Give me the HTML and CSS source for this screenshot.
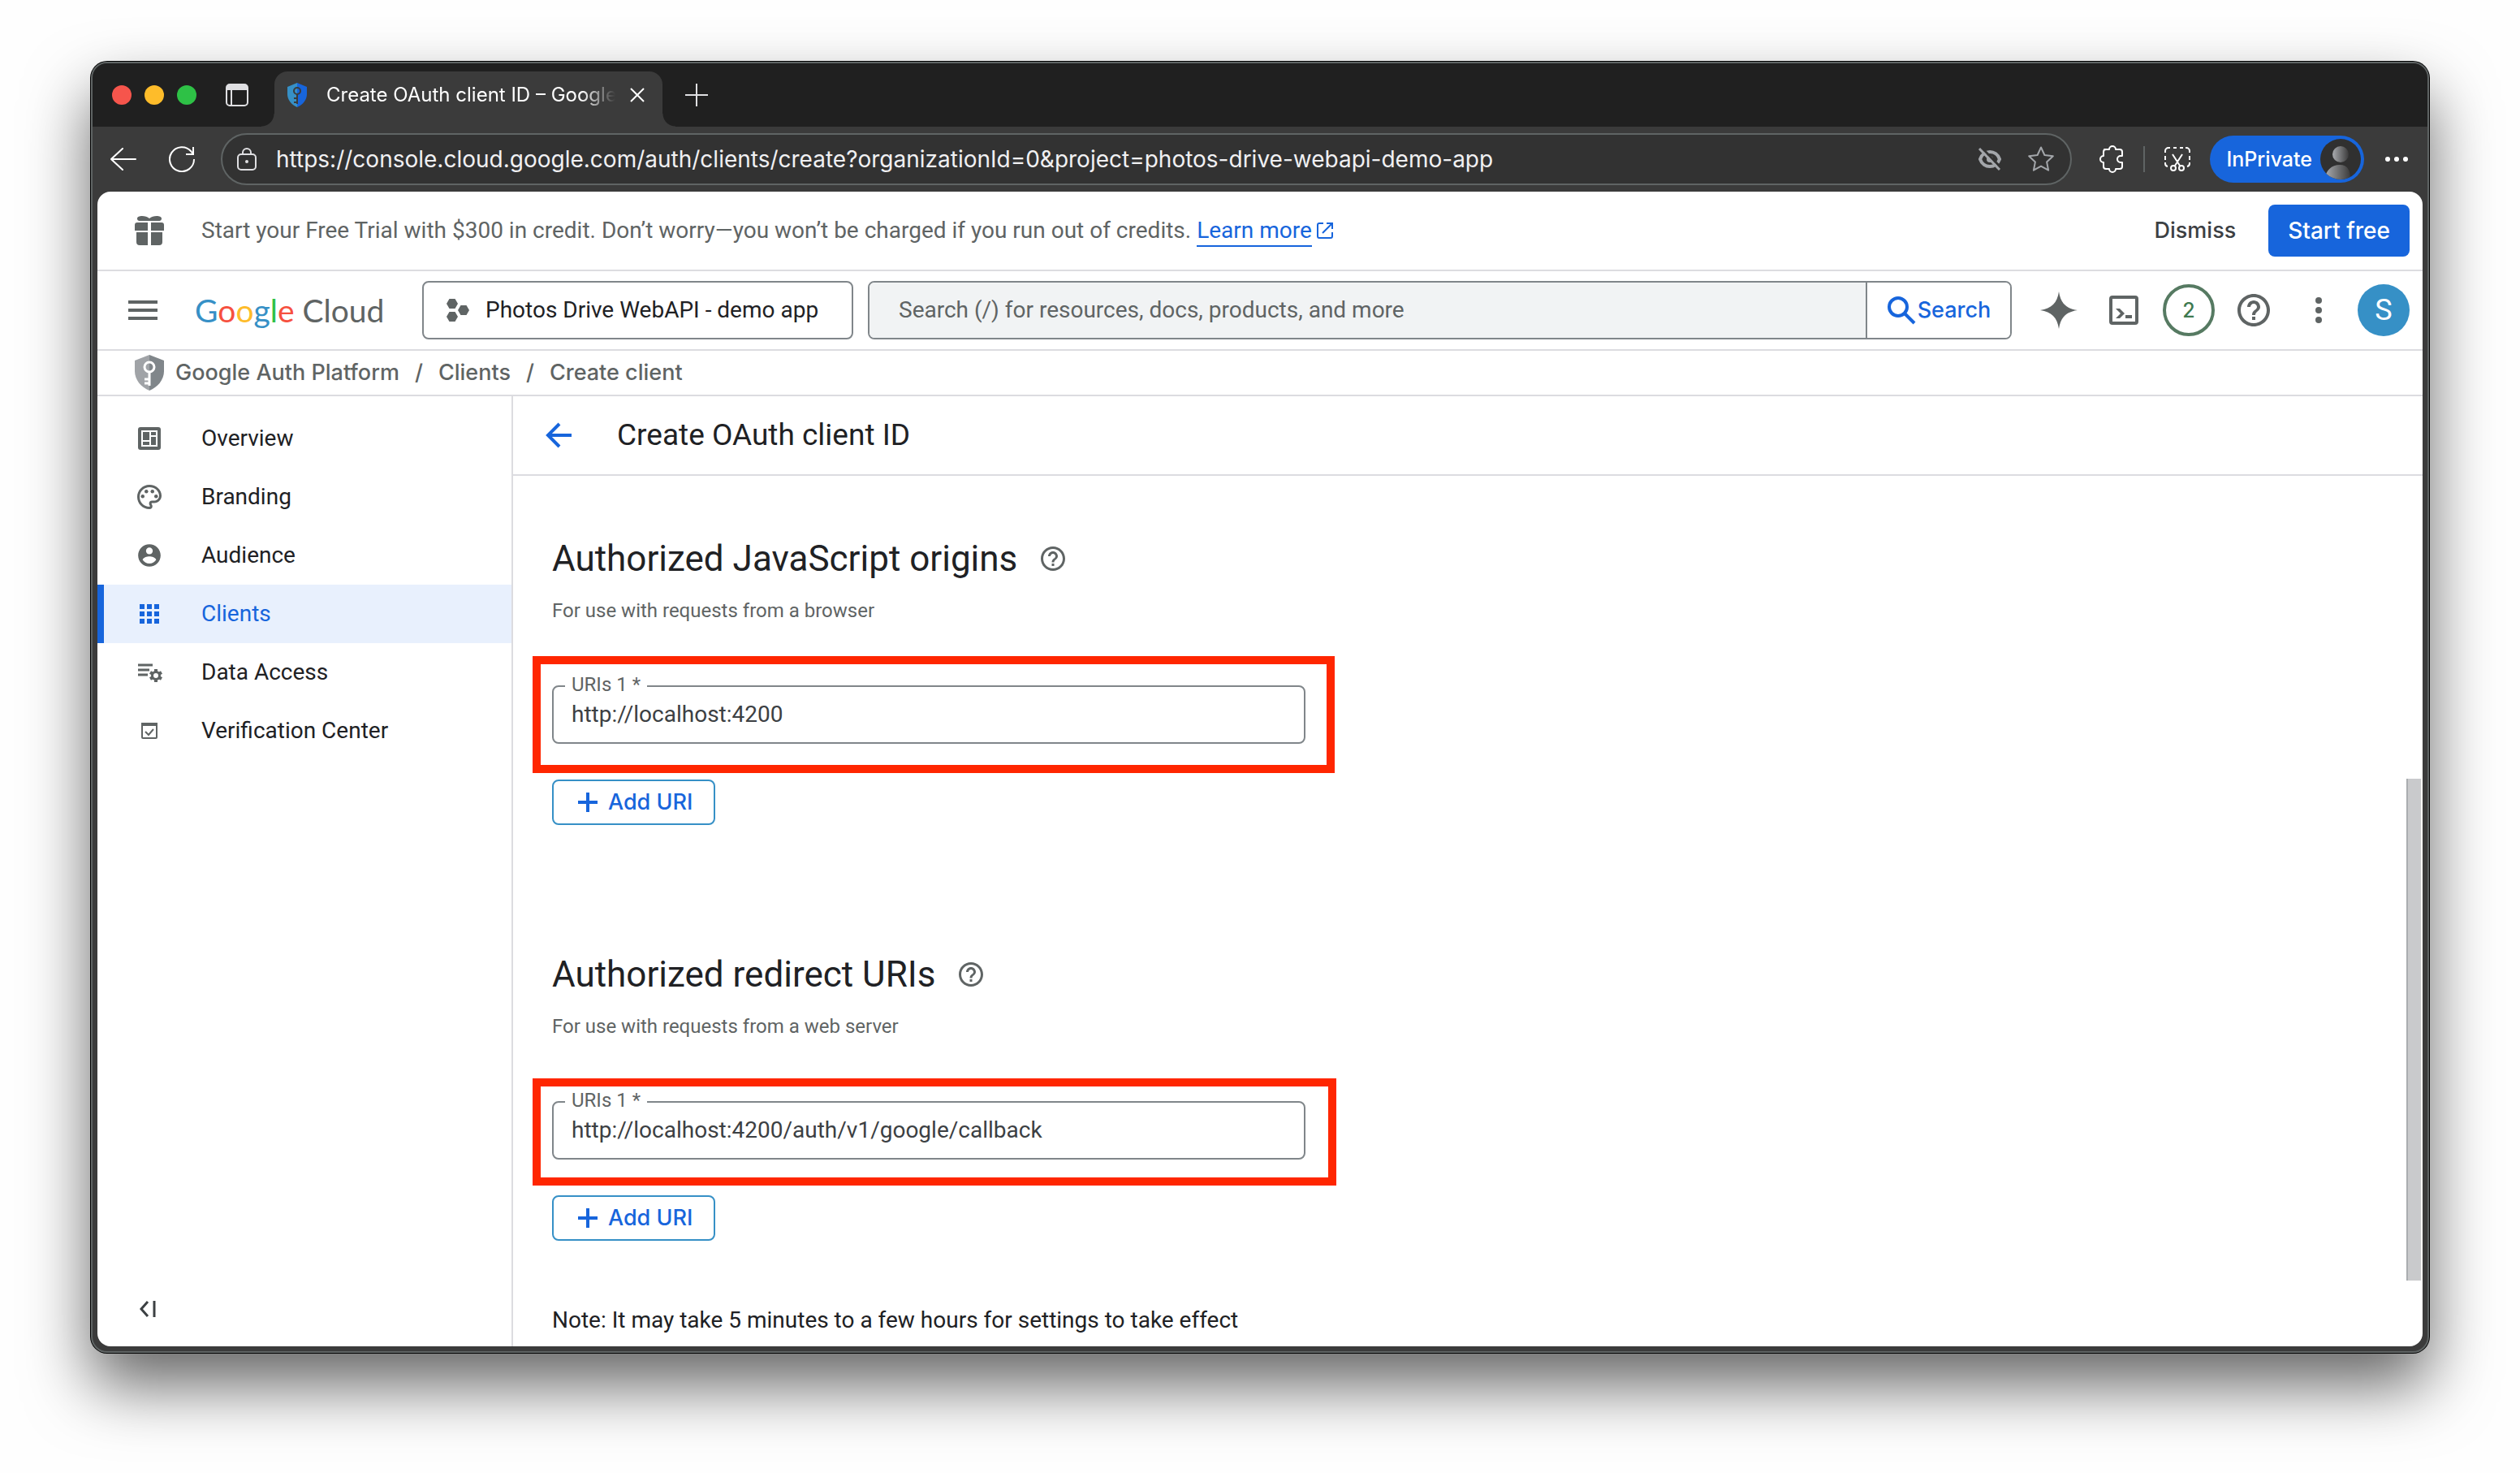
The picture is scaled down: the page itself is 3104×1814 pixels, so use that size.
FILE: index.html
```html
<!DOCTYPE html>
<html lang="en">
<head>
<meta charset="utf-8">
<meta name="viewport" content="width=device-width, initial-scale=1">
<title>Create OAuth client ID – Google Auth Platform</title>
<link rel="stylesheet" href="styles.css">
</head>
<body>
<div class="window">
  <header class="tab-strip">
    <div class="lights"><span class="light light-red"></span><span class="light light-yellow"></span><span class="light light-green"></span></div>
    <button class="plain tab-actions" aria-label="Tab actions">
      <svg width="28" height="28" viewBox="0 0 28 28"><rect x="1" y="1" width="26" height="26" rx="4" fill="none" stroke="#dfdfe2" stroke-width="2"/><path d="M1 8V5a4 4 0 0 1 4-4h18a4 4 0 0 1 4 4v3zM6 8h2v19H6z" fill="#dfdfe2"/></svg>
    </button>
    <div class="tab">
      <svg width="24" height="30" viewBox="0 0 24 30"><path d="M12 0 0 5v9c0 7 5 13 12 16z" fill="#3690c6"/><path d="m12 0 12 5v9c0 7-5 13-12 16z" fill="#1765dc"/><circle cx="12" cy="10" r="4" fill="none" stroke="#3b3b3b" stroke-width="2"/><path d="M12 14v12M12 19H8M12 24H8" fill="none" stroke="#3b3b3b" stroke-width="2"/></svg>
      <span class="tab-title">Create OAuth client ID – Google</span>
      <button class="plain" aria-label="Close tab"><svg width="18" height="18" viewBox="0 0 18 18"><path d="m1 1 16 16M17 1 1 17" stroke="#fff" stroke-width="2"/></svg></button>
    </div>
    <button class="plain new-tab" aria-label="New tab"><svg width="28" height="28" viewBox="0 0 28 28"><path d="M14 0v28M0 14h28" stroke="#dfdfe2" stroke-width="2"/></svg></button>
  </header>

  <div class="toolbar">
    <button class="plain back" aria-label="Back"><svg width="32" height="28" viewBox="0 0 32 28"><path d="M31 14H1M15 1 1 14l14 13" fill="none" stroke="#fff" stroke-width="2" stroke-linecap="round"/></svg></button>
    <button class="plain reload" aria-label="Reload"><svg width="32" height="32" viewBox="0 0 32 32"><path d="M31 16A15 15 0 1 1 27.500 6.500L30 10M30 1v9h-9" fill="none" stroke="#fff" stroke-width="2"/></svg></button>
    <div class="address">
      <svg width="24" height="28" viewBox="0 0 24 28"><rect x="1" y="8" width="22" height="19" rx="4" fill="none" stroke="#dfdfe2" stroke-width="2"/><path d="M7 8V6a5 5 0 0 1 10 0v2" fill="none" stroke="#dfdfe2" stroke-width="2"/><circle cx="12" cy="17" r="2" fill="#dfdfe2"/></svg>
      <input class="address-input" aria-label="Address" value="https://console.cloud.google.com/auth/clients/create?organizationId=0&amp;project=photos-drive-webapi-demo-app">
      <svg width="30" height="28" viewBox="0 0 30 28"><path d="M3 14c2-6 7-9 12-9s10 3 12 9c-2 6-7 9-12 9S5 20 3 14z" fill="none" stroke="#a3a6aa" stroke-width="4"/><circle cx="15" cy="14" r="4" fill="#a3a6aa"/><path d="m5 0 25 26" stroke="#323232" stroke-width="3"/><path d="m2 1 25 26" stroke="#a3a6aa" stroke-width="3"/></svg>
      <button class="plain star" aria-label="Add to favorites"><svg width="32" height="32" viewBox="0 0 32 32"><path d="m16 1.500 4.400 9.500 10.400 1.300-7.700 7.100 2 10.300L16 24.600l-9.100 5.100 2-10.300-7.700-7.100L11.600 11z" fill="none" stroke="#a3a6aa" stroke-width="2" stroke-linejoin="round"/></svg></button>
    </div>
    <button class="plain puzzle" aria-label="Extensions"><svg width="30" height="34" viewBox="0 0 30 34"><path d="M6 5h6a4 4 0 0 1 8 0h5a3 3 0 0 1 3 3v5h-2a4 4 0 0 0 0 8h2v5a3 3 0 0 1-3 3h-5a4 4 0 0 1-8 0H8a3 3 0 0 1-3-3v-5a4 4 0 0 1 0-8V8a3 3 0 0 1 3-3z" fill="none" stroke="#fff" stroke-width="2" stroke-linejoin="round"/></svg></button>
    <span class="divider"></span>
    <button class="plain shot" aria-label="Screenshot"><svg width="32" height="32" viewBox="0 0 32 32"><g fill="none" stroke="#fff" stroke-width="2"><path d="M1 8V6a4 4 0 0 1 4-4h2M11 2h4M19 2h4M26 2h1a4 4 0 0 1 4 4v2M31 12v5M1 12v5M1 20v1a4 4 0 0 0 3 4M31 20v1a4 4 0 0 1-3 4M10 10l9 14M22 10l-9 14"/><circle cx="11" cy="27" r="3"/><circle cx="21" cy="27" r="3"/></g></svg></button>
    <button class="private">InPrivate
      <svg width="50" height="50" viewBox="0 0 50 50"><defs><linearGradient id="person"><stop offset="0" stop-color="#a9abaf"/><stop offset="1" stop-color="#3b3b3b"/></linearGradient><clipPath id="disc"><circle cx="25" cy="25" r="25"/></clipPath></defs><circle cx="25" cy="25" r="25" fill="#303030"/><g clip-path="url(#disc)" fill="url(#person)"><circle cx="25" cy="19" r="10"/><path d="M6 50c0-11 8-18 18-18s13 7 13 18z"/></g></svg>
    </button>
    <button class="plain more" aria-label="Settings and more"><svg width="28" height="6" viewBox="0 0 28 6" fill="#fff"><circle cx="3" cy="3" r="3"/><circle cx="14" cy="3" r="3"/><circle cx="25" cy="3" r="3"/></svg></button>
  </div>

  <div class="page">
    <section class="trial">
      <svg width="36" height="36" viewBox="0 0 36 36" fill="#5f6464"><path d="M3 3c0-4 11-4 15 0 4-4 15-4 15 0s-4 3-7 3H10C7 6 3 7 3 3z"/><path d="M0 11a3 3 0 0 1 3-3h13v10H0zM20 8h13a3 3 0 0 1 3 3v7H20zM2 20h14v16H6a4 4 0 0 1-4-4zM20 20h14v12a4 4 0 0 1-4 4H20z"/></svg>
      <p class="trial-text">Start your Free Trial with $300 in credit. Don’t worry—you won’t be charged if you run out of credits. <a href="#">Learn more</a></p>
      <svg class="external" width="20" height="20" viewBox="0 0 20 20" fill="none" stroke="#1765dc" stroke-width="2"><path d="M8 1H3a2 2 0 0 0-2 2v14a2 2 0 0 0 2 2h14a2 2 0 0 0 2-2v-5M12 1h7v7M19 1 7 13"/></svg>
      <button class="plain dismiss">Dismiss</button>
      <button class="start">Start free</button>
    </section>

    <header class="bar">
      <button class="plain menu" aria-label="Main menu"><svg width="36" height="24" viewBox="0 0 36 24"><path d="M0 2h36M0 12h36M0 22h36" stroke="#5f6464" stroke-width="4"/></svg></button>
      <a class="logo" href="#"><span class="g-blue">G</span><span class="g-red">o</span><span class="g-yellow">o</span><span class="g-blue">g</span><span class="g-green">l</span><span class="g-red">e</span> <span class="cloud">Cloud</span></a>
      <button class="project">
        <svg width="28" height="28" viewBox="0 0 28 28" fill="#5f6464"><path d="M3.500 0h7L14 6l-3.500 6h-7L0 6zM17.500 8h7l3.500 6-3.500 6h-7L14 14zM3.500 16h7l3.500 6-3.500 6h-7L0 22z"/></svg>
        Photos Drive WebAPI - demo app
      </button>
      <form class="search">
        <input class="search-input" aria-label="Search" placeholder="Search (/) for resources, docs, products, and more">
        <button class="search-button" type="button"><svg width="36" height="36" viewBox="0 0 36 36" fill="none" stroke="#1765dc" stroke-width="4"><circle cx="14" cy="14" r="11"/><path d="m22 22 12 12"/></svg>Search</button>
      </form>
      <nav class="tools" aria-label="Tools">
        <button class="plain" aria-label="Gemini"><svg width="46" height="46" viewBox="0 0 46 46"><path d="M23 0c2 14 9 21 23 23-14 2-21 9-23 23-2-14-9-21-23-23C14 21 21 14 23 0z" fill="#5f6464"/></svg></button>
        <button class="plain" aria-label="Cloud Shell"><svg width="36" height="36" viewBox="0 0 36 36"><rect x="2" y="2" width="32" height="32" rx="2" fill="none" stroke="#5f6464" stroke-width="4"/><path d="M8 16h5l6 6-6 6H8l6-6zM20 24h8v4h-8z" fill="#5f6464"/></svg></button>
        <button class="plain" aria-label="Notifications"><span class="count">2</span></button>
        <button class="plain" aria-label="Help"><svg width="48" height="48" viewBox="0 0 24 24" fill="#5f6464"><path d="M11 18h2v-2h-2v2zm1-16C6.480 2 2 6.480 2 12s4.480 10 10 10 10-4.480 10-10S17.520 2 12 2zm0 18c-4.410 0-8-3.590-8-8s3.590-8 8-8 8 3.590 8 8-3.590 8-8 8zm0-14c-2.210 0-4 1.790-4 4h2c0-1.100.9-2 2-2s2 .9 2 2c0 2-3 1.750-3 5h2c0-2.250 3-2.500 3-5 0-2.210-1.790-4-4-4z"/></svg></button>
        <button class="plain" aria-label="More options"><svg width="8" height="32" viewBox="0 0 8 32" fill="#5f6464"><circle cx="4" cy="4" r="4"/><circle cx="4" cy="16" r="4"/><circle cx="4" cy="28" r="4"/></svg></button>
        <button class="plain" aria-label="Account"><span class="avatar">S</span></button>
      </nav>
    </header>

    <nav class="crumbs" aria-label="Breadcrumb">
      <svg width="36" height="44" viewBox="0 0 36 44"><path d="M18 0 0 7v13c0 11 8 20 18 24z" fill="#a0a3a7"/><path d="m18 0 18 7v13c0 11-8 20-18 24z" fill="#80868a"/><circle cx="18" cy="15" r="6" fill="none" stroke="#fff" stroke-width="3"/><path d="M18 21v17M18 30h-6M18 35h-6" fill="none" stroke="#fff" stroke-width="3"/></svg>
      <a href="#">Google Auth Platform</a><span class="slash">/</span><a href="#">Clients</a><span class="slash">/</span><a href="#">Create client</a>
    </nav>

    <div class="body">
      <aside class="sidebar">
        <nav class="side-nav" aria-label="Google Auth Platform">
          <a class="side-item" href="#"><svg width="36" height="36" viewBox="0 0 36 36"><rect x="4" y="4" width="28" height="28" rx="3" fill="#5f6464"/><rect x="8" y="8" width="20" height="20" fill="#fff"/><path d="M10 10h8v10h-8zM10 22h8v4h-8zM20 10h6v4h-6zM20 16h6v10h-6z" fill="#5f6464"/></svg>Overview</a>
          <a class="side-item" href="#"><svg width="36" height="36" viewBox="0 0 24 24" fill="#5f6464"><path d="M12 22C6.490 22 2 17.510 2 12S6.490 2 12 2s10 4.040 10 9c0 3.310-2.690 6-6 6h-1.770c-.28 0-.5.22-.5.5 0 .12.05.23.13.33.41.47.64 1.060.64 1.670A2.500 2.500 0 0 1 12 22zm0-18c-4.410 0-8 3.590-8 8s3.590 8 8 8c.28 0 .5-.22.5-.5a.54.54 0 0 0-.14-.35c-.41-.46-.63-1.050-.63-1.650a2.500 2.500 0 0 1 2.500-2.500H16c2.210 0 4-1.790 4-4 0-3.860-3.590-7-8-7z"/><circle cx="6.500" cy="11.500" r="1.500"/><circle cx="9.500" cy="7.500" r="1.500"/><circle cx="14.500" cy="7.500" r="1.500"/><circle cx="17.500" cy="11.500" r="1.500"/></svg>Branding</a>
          <a class="side-item" href="#"><svg width="36" height="36" viewBox="-1 -1 26 26" fill="#5f6464"><path d="M12 2C6.480 2 2 6.480 2 12s4.480 10 10 10 10-4.480 10-10S17.520 2 12 2zm0 3c1.660 0 3 1.340 3 3s-1.340 3-3 3-3-1.340-3-3 1.340-3 3-3zm0 14.200c-2.500 0-4.710-1.280-6-3.220.03-1.990 4-3.080 6-3.080 1.990 0 5.970 1.090 6 3.080-1.290 1.940-3.500 3.220-6 3.220z"/></svg>Audience</a>
          <a class="side-item active" href="#" aria-current="page"><svg width="36" height="36" viewBox="0 0 36 36" fill="#1765dc"><path d="M6 6h6v6H6zM15 6h6v6h-6zM24 6h6v6h-6zM6 15h6v6H6zM15 15h6v6h-6zM24 15h6v6h-6zM6 24h6v6H6zM15 24h6v6h-6zM24 24h6v6h-6z"/></svg>Clients</a>
          <a class="side-item" href="#"><svg width="36" height="36" viewBox="0 0 36 36"><path d="M4 9h18M4 15h14M4 21h12" stroke="#5f6464" stroke-width="3"/><path d="M26 14v16M19 18l14 8M33 18l-14 8" stroke="#5f6464" stroke-width="4"/><circle cx="26" cy="22" r="6" fill="#5f6464"/><circle cx="26" cy="22" r="3" fill="#fff"/></svg>Data Access</a>
          <a class="side-item" href="#"><svg width="36" height="36" viewBox="0 0 36 36" fill="none" stroke="#5f6464" stroke-width="2"><rect x="9" y="9" width="18" height="18" rx="1"/><path d="M8 10h20" stroke-width="4"/><path d="m13 19 4 4 6-7"/></svg>Verification Center</a>
        </nav>
        <button class="plain collapse" aria-label="Collapse navigation"><svg width="20" height="20" viewBox="0 0 20 20" fill="none" stroke="#3c4043" stroke-width="3"><path d="m10 1-8 9 8 9M18 0v20"/></svg></button>
      </aside>

      <main class="main">
        <header class="main-head">
          <a href="#" aria-label="Back to clients"><svg width="32" height="32" viewBox="0 0 32 32" fill="none" stroke="#1765dc" stroke-width="4"><path d="M32 16H3M17 2 3 16l14 14"/></svg></a>
          <h1 class="title">Create OAuth client ID</h1>
        </header>
        <div class="scroll">
          <form class="form">
            <section class="group">
              <div class="group-head"><h2>Authorized JavaScript origins</h2>
                <button class="plain" type="button" aria-label="About origins"><svg width="36" height="36" viewBox="0 0 24 24" fill="#5f6464"><path d="M11 18h2v-2h-2v2zm1-16C6.480 2 2 6.480 2 12s4.480 10 10 10 10-4.480 10-10S17.520 2 12 2zm0 18c-4.410 0-8-3.590-8-8s3.590-8 8-8 8 3.590 8 8-3.590 8-8 8zm0-14c-2.210 0-4 1.790-4 4h2c0-1.100.9-2 2-2s2 .9 2 2c0 2-3 1.750-3 5h2c0-2.250 3-2.500 3-5 0-2.210-1.790-4-4-4z"/></svg></button>
              </div>
              <p class="hint">For use with requests from a browser</p>
              <div class="field">
                <label for="origin">URIs 1 *</label>
                <input id="origin" value="http://localhost:4200">
                <span class="mark mark-origin"></span>
              </div>
              <button class="add" type="button"><svg width="24" height="24" viewBox="0 0 24 24"><path d="M12 0v24M0 12h24" stroke="#1765dc" stroke-width="4"/></svg>Add URI</button>
            </section>
            <section class="group">
              <div class="group-head"><h2>Authorized redirect URIs</h2>
                <button class="plain" type="button" aria-label="About redirects"><svg width="36" height="36" viewBox="0 0 24 24" fill="#5f6464"><path d="M11 18h2v-2h-2v2zm1-16C6.480 2 2 6.480 2 12s4.480 10 10 10 10-4.480 10-10S17.520 2 12 2zm0 18c-4.410 0-8-3.590-8-8s3.590-8 8-8 8 3.590 8 8-3.590 8-8 8zm0-14c-2.210 0-4 1.790-4 4h2c0-1.100.9-2 2-2s2 .9 2 2c0 2-3 1.750-3 5h2c0-2.250 3-2.500 3-5 0-2.210-1.790-4-4-4z"/></svg></button>
              </div>
              <p class="hint">For use with requests from a web server</p>
              <div class="field">
                <label for="redirect">URIs 1 *</label>
                <input id="redirect" value="http://localhost:4200/auth/v1/google/callback">
                <span class="mark mark-redirect"></span>
              </div>
              <button class="add" type="button"><svg width="24" height="24" viewBox="0 0 24 24"><path d="M12 0v24M0 12h24" stroke="#1765dc" stroke-width="4"/></svg>Add URI</button>
            </section>
            <p class="note">Note: It may take 5 minutes to a few hours for settings to take effect</p>
          </form>
          <div class="track"><div class="thumb"></div></div>
        </div>
      </main>
    </div>
  </div>
</div>
</body>
</html>
```
FILE: styles.css
```css
:root {
  --blue: #1765dc;
  --sky: #3690c6;
  --gray: #5f6464;
  --ink: #202124;
  --line: #dcdce0;
  --outline: #80868a;
  --chrome: #3b3b3b;
  --ui: Inter, "Liberation Sans", sans-serif;
  --text: Roboto, "Liberation Sans", sans-serif;
}

* { box-sizing: border-box; }

body {
  margin: 0;
  min-height: 100vh;
  display: flex;
  padding: 76px 112px 148px;
  background: #fefefe;
  color: var(--ink);
  font: 28px/40px var(--text);
}

h1, h2, p { margin: 0; font-weight: 400; }
a { color: inherit; text-decoration: none; }
svg { flex: none; display: block; }
button, input { font: inherit; color: inherit; }
input { min-width: 0; border: 0; outline: 0; background: none; padding: 0; }

button {
  display: flex;
  align-items: center;
  justify-content: center;
  flex: none;
  padding: 0;
  font: 500 27px/40px var(--ui);
  white-space: nowrap;
}
.plain { border: 0; background: none; }

/* Browser window */
.window {
  flex: 1;
  min-width: 0;
  display: flex;
  flex-direction: column;
  border: 2px solid var(--gray);
  border-radius: 20px;
  background: var(--chrome);
  box-shadow: 0 0 0 1px #000, 0 40px 80px rgba(0, 0, 0, .6);
}

.tab-strip {
  display: flex;
  align-items: center;
  height: 78px;
  padding-left: 24px;
  border-radius: 18px 18px 0 0;
  background: #202020;
}
.lights { display: flex; gap: 16px; }
.light { width: 24px; height: 24px; border-radius: 50%; }
.light-red { background: #f6554c; }
.light-yellow { background: #febc2a; }
.light-green { background: #2ec146; }
.tab-actions { margin: 0 32px 0 36px; }

.tab {
  position: relative;
  align-self: stretch;
  display: flex;
  align-items: center;
  width: 478px;
  margin-top: 10px;
  padding: 0 22px 10px 16px;
  border-radius: 16px 16px 0 0;
  background: var(--chrome);
}
.tab::before, .tab::after {
  content: "";
  position: absolute;
  bottom: 0;
  width: 16px;
  height: 16px;
}
.tab::before { right: 100%; background: radial-gradient(circle at 0 0, transparent 15px, var(--chrome) 16px); }
.tab::after { left: 100%; background: radial-gradient(circle at 100% 0, transparent 15px, var(--chrome) 16px); }
.tab-title {
  flex: 1;
  overflow: hidden;
  margin: 0 18px 0 24px;
  color: #fff;
  font: 24px/32px var(--ui);
  white-space: nowrap;
  mask-image: linear-gradient(to right, #000 88%, transparent);
}
.new-tab { margin-left: 28px; }

.toolbar {
  display: flex;
  align-items: center;
  height: 80px;
  padding: 0 24px 0 22px;
}
.reload { margin: 0 32px 0 40px; }
.address {
  flex: 1;
  display: flex;
  align-items: center;
  height: 64px;
  padding: 0 20px 0 18px;
  border: 2px solid var(--gray);
  border-radius: 32px;
  background: #323232;
}
.address-input {
  flex: 1;
  margin: 0 24px;
  color: #f0f0f2;
  font: 28px/40px var(--ui);
}
.star { margin-left: 32px; }
.puzzle { margin: 0 24px 0 34px; }
.divider { width: 2px; height: 32px; background: var(--gray); }
.shot { margin: 0 24px; }
.private {
  gap: 10px;
  height: 58px;
  padding: 0 4px 0 20px;
  border: 0;
  border-radius: 29px;
  background: var(--blue);
  color: #fff;
  font-size: 25px;
}
.more { margin-left: 26px; }

/* Page */
.page {
  flex: 1;
  display: flex;
  flex-direction: column;
  overflow: hidden;
  margin: 0 6px 6px;
  border-radius: 16px;
  background: #fff;
}

.trial {
  display: flex;
  align-items: center;
  height: 98px;
  padding: 0 16px 0 46px;
  border-bottom: 2px solid var(--line);
  color: var(--gray);
}
.trial-text { margin-left: 46px; }
.trial-text a { padding-bottom: 2px; border-bottom: 2px solid var(--blue); color: var(--blue); }
.external { margin-left: 6px; }
.dismiss { margin: 0 40px 0 auto; color: #3c4043; }
.start {
  height: 64px;
  padding: 0 24px;
  border: 0;
  border-radius: 8px;
  background: var(--blue);
  color: #fff;
  font-size: 28px;
}

.bar {
  display: flex;
  align-items: center;
  height: 98px;
  padding: 0 8px 0 38px;
  border-bottom: 2px solid var(--line);
}
.logo {
  width: 280px;
  margin-left: 46px;
  font: 39px/48px Lato, "Liberation Sans", sans-serif;
  white-space: nowrap;
}
.g-blue { color: var(--sky); }
.g-red { color: #f6503f; }
.g-yellow { color: #febc2a; }
.g-green { color: #2ec146; }
.cloud { color: var(--gray); }
.project {
  gap: 20px;
  justify-content: flex-start;
  width: 531px;
  height: 72px;
  padding: 0 28px;
  border: 2px solid var(--outline);
  border-radius: 8px;
  background: #fff;
  color: var(--ink);
  font: 28px/40px var(--text);
}
.search {
  flex: 1;
  display: flex;
  height: 72px;
  margin: 0 18px;
  border: 2px solid var(--outline);
  border-radius: 8px;
  overflow: hidden;
}
.search-input { flex: 1; padding: 0 36px; background: #f1f3f4; }
.search-input::placeholder { color: var(--gray); opacity: 1; }
.search-button {
  gap: 2px;
  width: 178px;
  border: 0;
  border-left: 2px solid var(--outline);
  background: #fff;
  color: var(--blue);
}
.tools { display: flex; }
.tools button { width: 80px; height: 64px; }
.count, .avatar {
  width: 64px;
  border-radius: 50%;
  line-height: 64px;
}
.count { border: 4px solid #567a62; color: #3f7a50; font-size: 25px; line-height: 56px; }
.avatar { background: var(--sky); color: #fff; font: 36px/64px var(--text); }

.crumbs {
  display: flex;
  align-items: center;
  height: 56px;
  padding-left: 46px;
  border-bottom: 2px solid var(--line);
  color: var(--gray);
  font: 500 27px/40px var(--ui);
}
.crumbs svg { margin-right: 14px; }
.slash { margin: 0 19px; }

.body { flex: 1; display: flex; }
.sidebar {
  display: flex;
  flex-direction: column;
  justify-content: space-between;
  width: 512px;
  padding: 16px 0 36px;
  border-right: 2px solid var(--line);
}
.side-item {
  display: flex;
  align-items: center;
  gap: 46px;
  height: 72px;
  padding-left: 38px;
  border-left: 8px solid transparent;
}
.side-item.active { border-left-color: var(--blue); background: #e8f0fd; color: var(--blue); }
.collapse { align-self: flex-start; margin-left: 52px; }

.main { flex: 1; display: flex; flex-direction: column; }
.main-head {
  display: flex;
  align-items: center;
  gap: 56px;
  height: 98px;
  padding-left: 40px;
  border-bottom: 2px solid var(--line);
}
.title { font-size: 37px; line-height: 48px; }

.scroll { flex: 1; display: flex; justify-content: space-between; }
.form { padding: 72px 0 0 48px; }
.group { width: 928px; }
.group + .group { margin-top: 154px; }
.group-head { display: flex; align-items: center; gap: 26px; height: 60px; }
.group-head h2 { font-size: 44px; line-height: 60px; }
.hint { margin: 16px 0 74px; color: var(--gray); font-size: 24px; line-height: 36px; }
.field { position: relative; height: 72px; margin-bottom: 44px; }
.field label {
  position: absolute;
  top: -17px;
  left: 16px;
  padding: 0 8px;
  background: #fff;
  color: var(--gray);
  font-size: 24px;
  line-height: 32px;
}
.field input {
  width: 100%;
  height: 72px;
  padding: 0 22px 2px;
  border: 2px solid var(--outline);
  border-radius: 8px;
  color: #3c4043;
}
/* Highlight frames drawn over the fields */
.mark { position: absolute; border: 10px solid #ff2600; pointer-events: none; }
.mark-origin { inset: -36px -36px -36px -24px; }
.mark-redirect { inset: -28px -38px -32px -24px; }
.add {
  gap: 13px;
  height: 56px;
  padding: 0 26px 0 30px;
  border: 2px solid var(--sky);
  border-radius: 8px;
  background: #fff;
  color: var(--blue);
}
.note { margin-top: 78px; }

.track { width: 20px; padding-right: 2px; }
.thumb {
  height: 618px;
  margin-top: 373px;
  border-left: 2px solid #aaadb0;
  background: #c9cacc;
}
```
